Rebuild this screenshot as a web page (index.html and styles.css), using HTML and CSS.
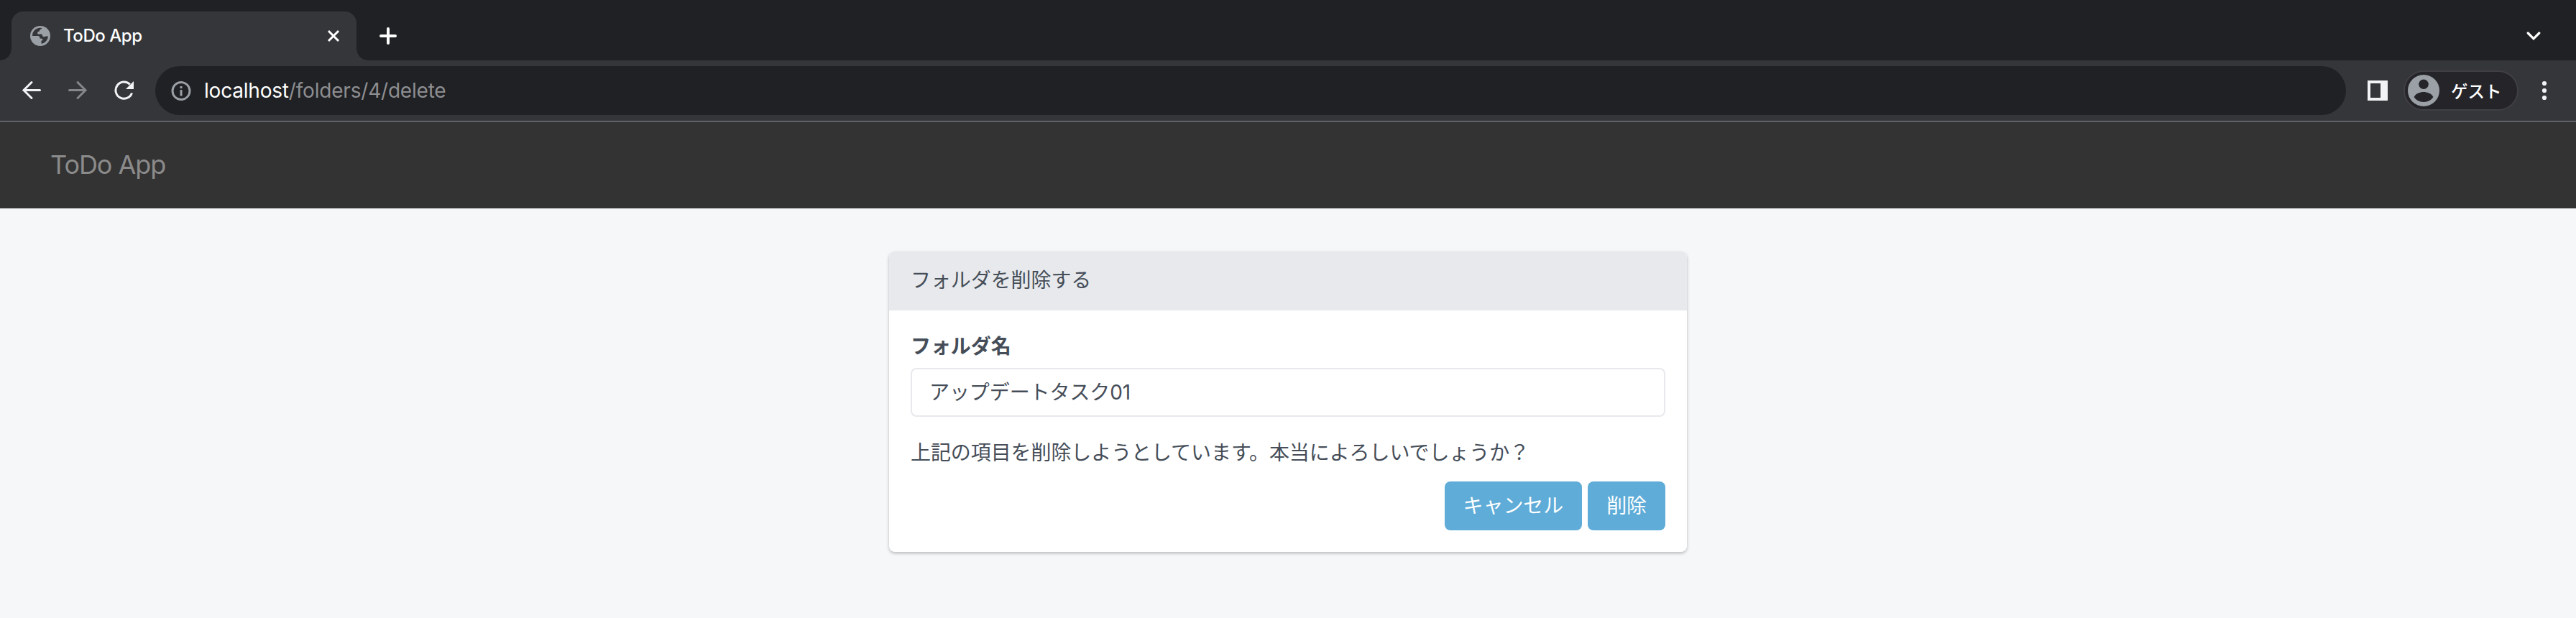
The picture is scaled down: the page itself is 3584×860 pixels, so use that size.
FILE: index.html
```html
<!DOCTYPE html>
<html lang="ja">
<head>
<meta charset="utf-8">
<title>ToDo App</title>
<link rel="stylesheet" href="styles.css">
</head>
<body>
<div class="tabstrip">
  <div class="tab">
    <svg class="favicon" width="28" height="28" viewBox="0 0 28 28"><circle cx="14" cy="14" r="14" fill="#9aa0a6"/><path d="M16 3C10 1.800 4.500 5.500 3.200 11.500L3 14H10.200C12.800 14 13.500 15.500 13.500 17.800H16C17.300 17.800 17.600 19 17 20.300L15.500 20.700V24.800C20.500 24.300 24.500 20 25 14.500H22.500C21.500 14.500 21 15.200 19.500 15.200C17.500 15.200 16.500 13.900 16.500 11.500H10.500C9.500 9.500 10.500 7.700 12.800 7.500C13.200 5.500 14 4.200 16 4.200Z" fill="#35363a"/><path d="M3 14H9.800C12.500 14 13.200 15.700 13.200 17.800H15.200V20.600H11.200V24.600C6.500 23.400 3 19.500 3 14Z" fill="#9aa0a6"/></svg>
    <span class="tab-title">ToDo App</span>
    <svg class="tab-close" width="18" height="18" viewBox="0 0 18 18"><path d="M2 2L16 16M16 2L2 16" stroke="#fff" stroke-width="3"/></svg>
  </div>
  <svg class="new-tab" width="24" height="24" viewBox="0 0 24 24"><path d="M12 2V22M2 12H22" stroke="#fff" stroke-width="4" stroke-linecap="round"/></svg>
  <svg class="tab-search" width="20" height="14" viewBox="0 0 20 14"><path d="M2.200 3L10 10.800L17.800 3" fill="none" stroke="#fff" stroke-width="3.200" stroke-linecap="round"/></svg>
</div>
<div class="toolbar">
  <div class="nav-icons">
    <svg width="28" height="28" viewBox="0 0 28 28"><path d="M25.500 14.500H3M14 3.500L3 14.500L14 25.500" fill="none" stroke="#f1f3f4" stroke-width="3" stroke-linecap="round"/></svg>
    <svg width="28" height="28" viewBox="0 0 28 28"><path d="M2.500 14.500H25M14 3.500L25 14.500L14 25.500" fill="none" stroke="#868789" stroke-width="3" stroke-linecap="round"/></svg>
    <svg width="28" height="28" viewBox="0 0 28 28"><path d="M25.500 18.500A11.600 11.600 0 1 1 22.800 6.500" fill="none" stroke="#f1f3f4" stroke-width="3"/><path d="M28 2V13H17Z" fill="#f1f3f4"/></svg>
  </div>
  <div class="address">
    <svg width="28" height="28" viewBox="0 0 28 28"><circle cx="14" cy="14.500" r="12" fill="none" stroke="#9aa0a6" stroke-width="3"/><path d="M12.500 13H15.500V21.500H12.500ZM12.500 8H15.500V11H12.500Z" fill="#9aa0a6"/></svg>
    <span class="url"><span class="host">localhost</span>/folders/4/delete</span>
  </div>
  <svg class="side-panel" width="28" height="28" viewBox="0 0 28 28"><path d="M0 0H28V28H0ZM4 4V24H18V4Z" fill="#f1f3f4" fill-rule="evenodd"/></svg>
  <div class="profile">
    <svg width="44" height="44" viewBox="0 0 44 44"><circle cx="22" cy="22" r="22" fill="#9aa0a6"/><circle cx="22" cy="13.300" r="6.800" fill="#242429"/><path d="M8.700 31C11 26 17 24 22 24S33 26 35.300 31C33 35 28 38 22 38S11 35 8.700 31Z" fill="#242429"/></svg>
    <span>ゲスト</span>
  </div>
  <svg class="menu" width="8" height="28" viewBox="0 0 8 28" fill="#f1f3f4"><circle cx="4" cy="4" r="3.100"/><circle cx="4" cy="14" r="3.100"/><circle cx="4" cy="24" r="3.100"/></svg>
</div>
<nav class="navbar"><a class="brand">ToDo App</a></nav>
<main>
  <section class="panel">
    <div class="panel-heading">フォルダを削除する</div>
    <form class="panel-body">
      <label class="label">フォルダ名</label>
      <div class="field">アップデートタスク01</div>
      <p class="message">上記の項目を削除しようとしています。本当によろしいでしょうか？</p>
      <div class="actions"><a class="btn">キャンセル</a><a class="btn">削除</a></div>
    </form>
  </section>
</main>
</body>
</html>
```
FILE: styles.css
```css
* { box-sizing: border-box; }
body {
  margin: 0;
  height: 860px;
  overflow: hidden;
  background: #f5f7f9;
  color: #454d58;
  font-family: Inter, "Noto Sans CJK JP", sans-serif;
  font-size: 28px;
}
svg { display: block; flex: none; }

.tabstrip {
  display: flex;
  align-items: center;
  height: 84px;
  padding: 16px 49px 0 16px;
  background: #202124;
}
.tab {
  position: relative;
  display: flex;
  align-items: center;
  width: 480px;
  height: 68px;
  padding: 0 23px 0 26px;
  border-radius: 16px 16px 0 0;
  background: #35363a;
  color: #fff;
  font-size: 24px;
}
.tab::before,
.tab::after {
  content: "";
  position: absolute;
  bottom: 0;
  width: 16px;
  height: 16px;
}
.tab::before {
  right: 100%;
  background: radial-gradient(circle at 0 0, transparent 15.500px, #35363a 16px);
}
.tab::after {
  left: 100%;
  background: radial-gradient(circle at 100% 0, transparent 15.500px, #35363a 16px);
}
.tab-title {
  margin-left: 18px;
  padding-bottom: 1px;
  font-weight: 450;
  letter-spacing: -.45px;
}
.tab-close { margin-left: auto; }
.new-tab { margin-left: 32px; }
.tab-search { margin-left: auto; }

.toolbar {
  display: flex;
  align-items: center;
  height: 86px;
  padding: 0 40px 0 30px;
  border-bottom: 2px solid #5f6368;
  background: #35363a;
}
.nav-icons { display: flex; gap: 36px; padding-bottom: 2px; }
.address {
  display: flex;
  align-items: center;
  width: 3048px;
  height: 68px;
  margin-left: 30px;
  padding-left: 22px;
  border-radius: 34px;
  background: #202124;
}
.url {
  margin-left: 18px;
  color: #8d8e91;
  letter-spacing: -.2px;
}
.host { color: #fff; }
.side-panel { margin-left: 30px; }
.profile {
  display: flex;
  align-items: center;
  width: 160px;
  height: 56px;
  margin-left: 22px;
  padding-left: 4px;
  border: 2px solid #3f3f44;
  border-radius: 28px;
  background: #242429;
  color: #fff;
  font-size: 23.5px;
  font-weight: 500;
}
.profile span { margin-left: 16px; }
.menu { margin-left: 32px; }

.navbar {
  display: flex;
  align-items: center;
  height: 120px;
  padding: 0 0 2px 70px;
  background: #333;
}
.brand { color: #8b8b8b; font-size: 36px; letter-spacing: -1.05px; }

main { display: flex; justify-content: center; padding-top: 60px; }
.panel {
  width: 1110px;
  height: 418px;
  overflow: hidden;
  border-radius: 8px;
  background: #fff;
  box-shadow: 0 2px 4px rgba(0, 0, 0, .25);
  letter-spacing: -.08px;
}
.panel-heading {
  height: 82px;
  padding: 0 30px;
  background: #e7e9ec;
  line-height: 80px;
}
.panel-body { display: flex; flex-direction: column; padding: 30px; }
.label { height: 50px; font-weight: 700; line-height: 40px; }
.field {
  height: 68px;
  padding: 0 24px;
  border: 2px solid #e8e8ed;
  border-radius: 8px;
  line-height: 65px;
}
.message { margin: 30px 0 20px; height: 40px; line-height: 40px; }
.actions { display: flex; justify-content: flex-end; gap: 8px; }
.btn {
  height: 68px;
  padding: 0 26px;
  border-radius: 8px;
  background: #5eacd7;
  color: #fff;
  line-height: 68px;
}
```
